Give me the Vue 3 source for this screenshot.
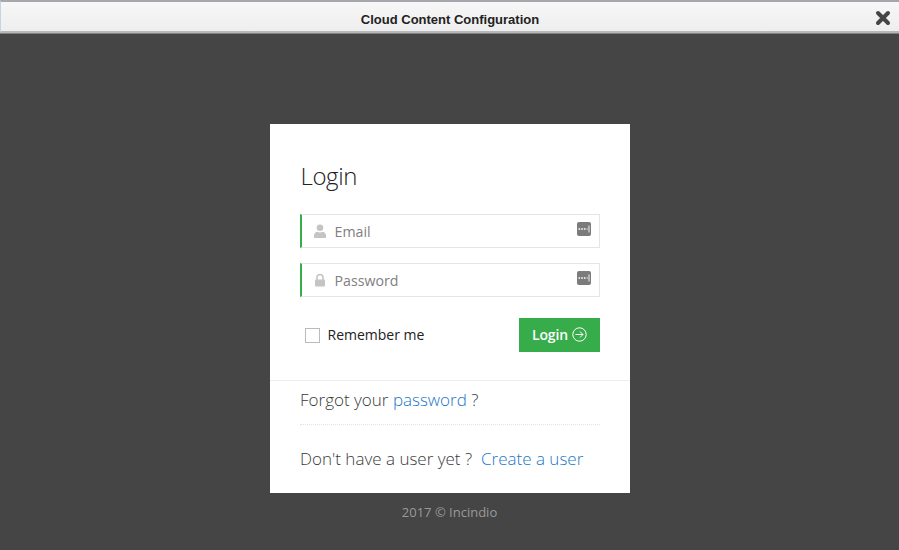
<template>
  <div class="page">
    <header class="bar">
      <span class="bar-title">Cloud Content Configuration</span>
      <svg class="close" width="16" height="16" viewBox="0 0 16 16"><path d="M3 3l10 10M13 3L3 13" stroke="#454545" stroke-width="4" stroke-linecap="round" fill="none"/></svg>
    </header>
    <main class="stage">
      <section class="card">
        <form class="form" @submit.prevent>
          <h3 class="title">Login</h3>
          <label class="field">
            <svg class="ficon" width="14" height="14" viewBox="0 0 14 14"><circle cx="7" cy="3.8" r="3.3" fill="#c4c4c4"/><path d="M1 14v-2.6C1 9.2 3 8 4.5 7.8c1.5 1 3.5 1 5 0C11 8 13 9.2 13 11.4V14z" fill="#c4c4c4"/></svg>
            <span class="ph">Email</span>
            <svg class="key" width="14" height="14" viewBox="0 0 14 14"><rect width="14" height="14" rx="2" fill="#7b7b7b"/><path d="M1.5 7h1.6M4.2 7h1.6M6.9 7h1.6" stroke="#fff" stroke-width="1.6"/><path d="M9.5 7h1.5" stroke="#ddd" stroke-width="1"/><path d="M12 3.5v7" stroke="#ddd" stroke-width="1.2"/></svg>
          </label>
          <label class="field second">
            <svg class="ficon" width="14" height="14" viewBox="0 0 14 14"><path d="M4 7V4.5a3 3 0 0 1 6 0V7" stroke="#c4c4c4" stroke-width="1.6" fill="none"/><rect x="2" y="6.5" width="10" height="7" rx="1" fill="#c4c4c4"/></svg>
            <span class="ph">Password</span>
            <svg class="key" width="14" height="14" viewBox="0 0 14 14"><rect width="14" height="14" rx="2" fill="#7b7b7b"/><path d="M1.5 7h1.6M4.2 7h1.6M6.9 7h1.6" stroke="#fff" stroke-width="1.6"/><path d="M9.5 7h1.5" stroke="#ddd" stroke-width="1"/><path d="M12 3.5v7" stroke="#ddd" stroke-width="1.2"/></svg>
          </label>
          <div class="actions">
            <label class="remember"><span class="box"></span>Remember me</label>
            <button class="btn" type="button"><span class="btn-text">Login</span>
              <svg width="15" height="15" viewBox="0 0 15 15"><circle cx="7.5" cy="7.5" r="6.7" stroke="#fff" fill="none"/><path d="M3.5 7.5h7.5M8 4.5l3 3-3 3" stroke="#fff" fill="none"/></svg>
            </button>
          </div>
        </form>
        <div class="links">
          <p class="forgot">Forgot your <a>password</a> ?</p>
          <p class="create">Don't have a user yet ? &nbsp;<a>Create a user</a></p>
        </div>
      </section>
      <footer class="copy">2017 © Incindio</footer>
    </main>
  </div>
</template>

<script setup>
</script>

<style>
html, body { margin: 0; background: #454545; }
</style>

<style scoped>
.page { width: 899px; height: 550px; display: flex; flex-direction: column; overflow: hidden; font-family: "Open Sans", sans-serif; background: #454545; }
.bar { height: 29px; flex: none; position: relative; display: flex; align-items: center; justify-content: center; border-top: 2px solid #a4a8ac; border-left: 1px solid #c5d3e2; border-bottom: 2px solid #b5b8ba; box-shadow: 0 1px #808080; background: linear-gradient(#f7f7f7, #eeeeee); box-sizing: content-box; }
.bar-title { font: bold 13px "Liberation Sans", sans-serif; color: #222; padding-top: 5px; }
.close { position: absolute; right: 8px; top: 8px; }
.stage { flex: 1; display: flex; flex-direction: column; align-items: center; padding-top: 91px; }
.card { width: 360px; height: 369px; background: #fff; box-sizing: border-box; }
.form { padding: 33px 30px 0; height: 257px; box-sizing: border-box; border-bottom: 1px solid #eee; margin: 0; }
.title { margin: 0 0 0 1px; font-size: 24px; font-weight: 300; letter-spacing: -0.4px; line-height: 38px; color: #222; }
.field { display: flex; align-items: center; height: 34px; box-sizing: border-box; margin-top: 19px; border: 1px solid #e5e5e5; border-left: 2px solid #36ac4a; padding: 0 8px 0 11px; }
.second { margin-top: 15px; }
.ficon { margin-right: 8px; }
.ph { flex: 1; font-size: 14.2px; color: #808080; }
.key { margin-top: -4px; }
.actions { display: flex; justify-content: space-between; align-items: center; margin-top: 21px; }
.remember { display: flex; align-items: center; font-size: 14px; line-height: 18px; color: #222; padding: 0 0 1px 5px; }
.box { width: 13px; height: 13px; border: 1px solid #bbb; margin: 1px 8px 0 0; }
.btn { width: 81px; height: 34px; border: 0; padding: 0 0 1px; background: #36ac4a; color: #fff; font: 600 14px "Open Sans", sans-serif; display: flex; align-items: center; justify-content: center; gap: 4px; letter-spacing: -0.1px; }
.btn-text { margin-left: 1px; }
.links { padding: 0 30px; }
.links p { margin: 0; font-size: 17px; font-weight: 300; color: #3a3a3a; text-indent: 0.5px; }
.links a { color: #2277c6; font-weight: 300; }
.forgot { padding: 8px 0 13px; line-height: 22px; border-bottom: 1px dotted #e4e4e4; }
.create { padding-top: 23px; line-height: 22px; }
.copy { margin-top: 10px; font-size: 13px; color: #9a9a9a; line-height: 18px; }
</style>
